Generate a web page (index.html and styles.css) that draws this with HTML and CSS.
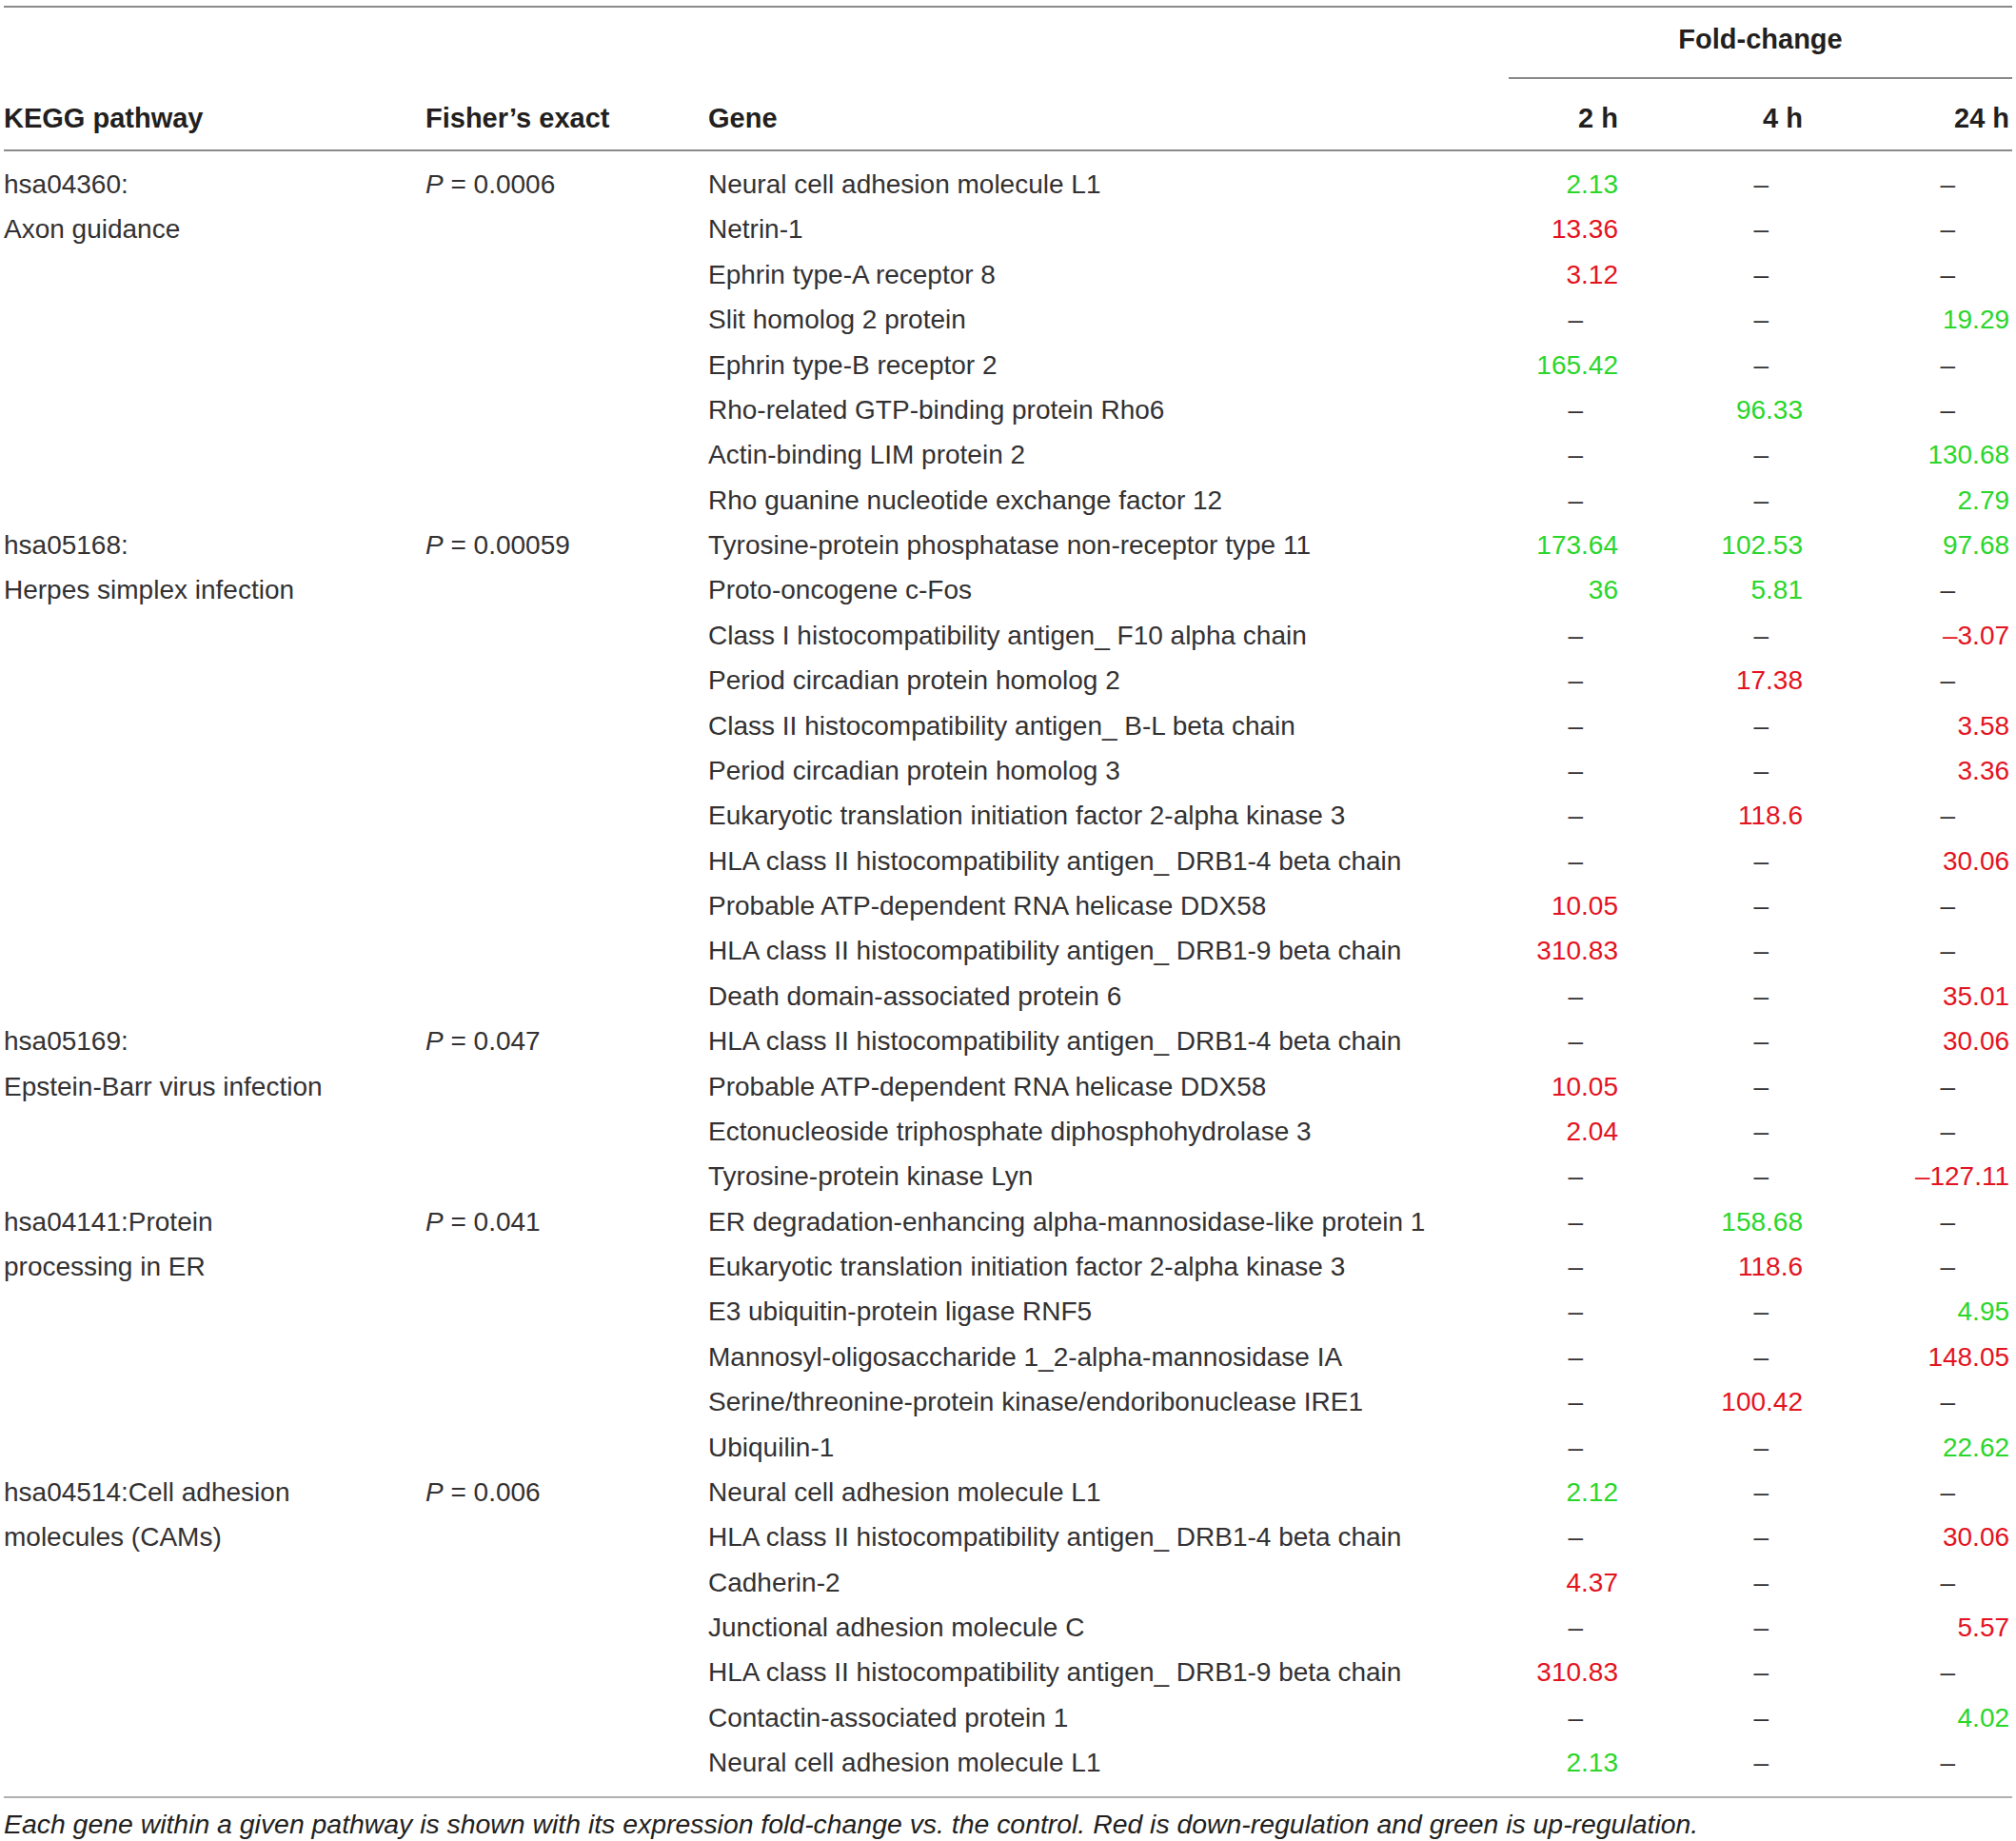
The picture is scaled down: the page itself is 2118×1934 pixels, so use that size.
FILE: index.html
```html
<!DOCTYPE html>
<html lang="en">
<head>
<meta charset="utf-8">
<title>KEGG pathways</title>
<link rel="stylesheet" href="styles.css">
</head>
<body>
<div class="page">
<table class="kt">
<colgroup>
<col class="c-path"><col class="c-fish"><col class="c-gene"><col class="c-h2"><col class="c-h4"><col class="c-h24">
</colgroup>
<thead>
<tr class="top">
<th colspan="3" class="blank"></th>
<th colspan="3" class="fold">Fold-change</th>
</tr>
<tr class="hdr">
<th>KEGG pathway</th><th>Fisher’s exact</th><th>Gene</th><th class="n">2 h</th><th class="n">4 h</th><th class="n last">24 h</th>
</tr>
</thead>
<tbody>
<tr class="sp"><td colspan="6"></td></tr>

<tr><td rowspan="8" class="path">hsa04360:<br>Axon guidance</td><td rowspan="8" class="fish"><i>P</i> = 0.0006</td><td>Neural cell adhesion molecule L1</td><td class="n g">2.13</td><td class="n d4">–</td><td class="n d24">–</td></tr>
<tr><td>Netrin-1</td><td class="n r">13.36</td><td class="n d4">–</td><td class="n d24">–</td></tr>
<tr><td>Ephrin type-A receptor 8</td><td class="n r">3.12</td><td class="n d4">–</td><td class="n d24">–</td></tr>
<tr><td>Slit homolog 2 protein</td><td class="n d2">–</td><td class="n d4">–</td><td class="n g last">19.29</td></tr>
<tr><td>Ephrin type-B receptor 2</td><td class="n g">165.42</td><td class="n d4">–</td><td class="n d24">–</td></tr>
<tr><td>Rho-related GTP-binding protein Rho6</td><td class="n d2">–</td><td class="n g">96.33</td><td class="n d24">–</td></tr>
<tr><td>Actin-binding LIM protein 2</td><td class="n d2">–</td><td class="n d4">–</td><td class="n g last">130.68</td></tr>
<tr><td>Rho guanine nucleotide exchange factor 12</td><td class="n d2">–</td><td class="n d4">–</td><td class="n g last">2.79</td></tr>

<tr><td rowspan="11" class="path">hsa05168:<br>Herpes simplex infection</td><td rowspan="11" class="fish"><i>P</i> = 0.00059</td><td>Tyrosine-protein phosphatase non-receptor type 11</td><td class="n g">173.64</td><td class="n g">102.53</td><td class="n g last">97.68</td></tr>
<tr><td>Proto-oncogene c-Fos</td><td class="n g">36</td><td class="n g">5.81</td><td class="n d24">–</td></tr>
<tr><td>Class I histocompatibility antigen_ F10 alpha chain</td><td class="n d2">–</td><td class="n d4">–</td><td class="n r last">–3.07</td></tr>
<tr><td>Period circadian protein homolog 2</td><td class="n d2">–</td><td class="n r">17.38</td><td class="n d24">–</td></tr>
<tr><td>Class II histocompatibility antigen_ B-L beta chain</td><td class="n d2">–</td><td class="n d4">–</td><td class="n r last">3.58</td></tr>
<tr><td>Period circadian protein homolog 3</td><td class="n d2">–</td><td class="n d4">–</td><td class="n r last">3.36</td></tr>
<tr><td>Eukaryotic translation initiation factor 2-alpha kinase 3</td><td class="n d2">–</td><td class="n r">118.6</td><td class="n d24">–</td></tr>
<tr><td>HLA class II histocompatibility antigen_ DRB1-4 beta chain</td><td class="n d2">–</td><td class="n d4">–</td><td class="n r last">30.06</td></tr>
<tr><td>Probable ATP-dependent RNA helicase DDX58</td><td class="n r">10.05</td><td class="n d4">–</td><td class="n d24">–</td></tr>
<tr><td>HLA class II histocompatibility antigen_ DRB1-9 beta chain</td><td class="n r">310.83</td><td class="n d4">–</td><td class="n d24">–</td></tr>
<tr><td>Death domain-associated protein 6</td><td class="n d2">–</td><td class="n d4">–</td><td class="n r last">35.01</td></tr>

<tr><td rowspan="4" class="path">hsa05169:<br>Epstein-Barr virus infection</td><td rowspan="4" class="fish"><i>P</i> = 0.047</td><td>HLA class II histocompatibility antigen_ DRB1-4 beta chain</td><td class="n d2">–</td><td class="n d4">–</td><td class="n r last">30.06</td></tr>
<tr><td>Probable ATP-dependent RNA helicase DDX58</td><td class="n r">10.05</td><td class="n d4">–</td><td class="n d24">–</td></tr>
<tr><td>Ectonucleoside triphosphate diphosphohydrolase 3</td><td class="n r">2.04</td><td class="n d4">–</td><td class="n d24">–</td></tr>
<tr><td>Tyrosine-protein kinase Lyn</td><td class="n d2">–</td><td class="n d4">–</td><td class="n r last">–127.11</td></tr>

<tr><td rowspan="6" class="path">hsa04141:Protein<br>processing in ER</td><td rowspan="6" class="fish"><i>P</i> = 0.041</td><td>ER degradation-enhancing alpha-mannosidase-like protein 1</td><td class="n d2">–</td><td class="n g">158.68</td><td class="n d24">–</td></tr>
<tr><td>Eukaryotic translation initiation factor 2-alpha kinase 3</td><td class="n d2">–</td><td class="n r">118.6</td><td class="n d24">–</td></tr>
<tr><td>E3 ubiquitin-protein ligase RNF5</td><td class="n d2">–</td><td class="n d4">–</td><td class="n g last">4.95</td></tr>
<tr><td>Mannosyl-oligosaccharide 1_2-alpha-mannosidase IA</td><td class="n d2">–</td><td class="n d4">–</td><td class="n r last">148.05</td></tr>
<tr><td>Serine/threonine-protein kinase/endoribonuclease IRE1</td><td class="n d2">–</td><td class="n r">100.42</td><td class="n d24">–</td></tr>
<tr><td>Ubiquilin-1</td><td class="n d2">–</td><td class="n d4">–</td><td class="n g last">22.62</td></tr>

<tr><td rowspan="7" class="path">hsa04514:Cell adhesion<br>molecules (CAMs)</td><td rowspan="7" class="fish"><i>P</i> = 0.006</td><td>Neural cell adhesion molecule L1</td><td class="n g">2.12</td><td class="n d4">–</td><td class="n d24">–</td></tr>
<tr><td>HLA class II histocompatibility antigen_ DRB1-4 beta chain</td><td class="n d2">–</td><td class="n d4">–</td><td class="n r last">30.06</td></tr>
<tr><td>Cadherin-2</td><td class="n r">4.37</td><td class="n d4">–</td><td class="n d24">–</td></tr>
<tr><td>Junctional adhesion molecule C</td><td class="n d2">–</td><td class="n d4">–</td><td class="n r last">5.57</td></tr>
<tr><td>HLA class II histocompatibility antigen_ DRB1-9 beta chain</td><td class="n r">310.83</td><td class="n d4">–</td><td class="n d24">–</td></tr>
<tr><td>Contactin-associated protein 1</td><td class="n d2">–</td><td class="n d4">–</td><td class="n g last">4.02</td></tr>
<tr><td>Neural cell adhesion molecule L1</td><td class="n g">2.13</td><td class="n d4">–</td><td class="n d24">–</td></tr>

<tr class="sp end"><td colspan="6"></td></tr>
</tbody>
</table>
<p class="note">Each gene within a given pathway is shown with its expression fold-change vs. the control. Red is down-regulation and green is up-regulation.</p>
</div>
</body>
</html>
```

FILE: styles.css
```css
html, body {
  margin: 0;
  padding: 0;
  background: #ffffff;
}

.page {
  padding: 6px 0 0 4px;
  font-family: "Liberation Sans", Arial, Helvetica, sans-serif;
  color: #333132;
}

.kt {
  border-collapse: collapse;
  table-layout: fixed;
  width: 2110px;
  font-size: 28px;
  border-top: 2px solid #8a8a8a;
}

.c-path { width: 443px; }
.c-fish { width: 297px; }
.c-gene { width: 841px; }
.c-h2 { width: 115px; }
.c-h4 { width: 194px; }
.c-h24 { width: 220px; }

.kt th {
  font-weight: bold;
  font-size: 29px;
  text-align: left;
  line-height: 28px;
  padding: 0;
  color: #231f20;
}

.top th {
  padding-top: 19px;
  padding-bottom: 26px;
}

.top .fold {
  text-align: center;
  border-bottom: 2px solid #8a8a8a;
}

.hdr th {
  padding-top: 27px;
  padding-bottom: 19px;
  border-bottom: 2px solid #8a8a8a;
}

.kt .n {
  text-align: right;
}

.kt .last {
  padding-right: 3px;
}

.kt td {
  padding: 0;
  line-height: 47.37px;
  vertical-align: middle;
  white-space: nowrap;
}

.kt td.path,
.kt td.fish {
  vertical-align: top;
  white-space: normal;
}

.sp td {
  height: 11px;
  line-height: 0;
}

.sp.end td {
  border-bottom: 2px solid #b0b0b0;
}

.g { color: #2bd62b; }
.r { color: #e3141f; }

.kt td.d2 { padding-right: 37px; }
.kt td.d4 { padding-right: 36px; }
.kt td.d24 { padding-right: 60px; }

.note {
  margin: 0;
  padding-top: 10px;
  font-size: 28.4px;
  line-height: 34px;
  font-style: italic;
  color: #231f20;
}
```
